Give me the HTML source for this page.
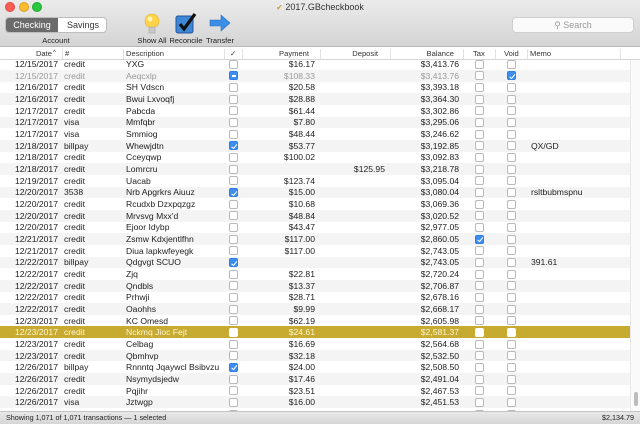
<!DOCTYPE html>
<html><head><style>
*{margin:0;padding:0;box-sizing:border-box}
body{width:640px;height:424px;overflow:hidden;font-family:"Liberation Sans",sans-serif;font-size:8.6px;color:#222;background:#fff;position:relative}
.tb{position:absolute;left:0;top:0;width:640px;height:47px;background:linear-gradient(#ebebeb,#d4d4d4);border-bottom:1px solid #b8b8b8}
.tl{position:absolute;top:2px;width:10px;height:10px;border-radius:50%}
.title{position:absolute;top:2px;left:0;width:640px;text-align:center;font-size:9px;color:#333}
.seg{position:absolute;left:5px;top:17px;width:102px;height:16px;border-radius:4px;border:1px solid #bdbdbd;background:#fff;overflow:hidden;font-size:9px}
.seg div{position:absolute;top:0;height:14px;line-height:14px;text-align:center}
.lbl{position:absolute;top:36px;font-size:7.6px;color:#222;text-align:center}
.search{position:absolute;left:512px;top:17px;width:122px;height:16px;border-radius:4px;background:#fafafa;border:1px solid #cfcfcf;color:#999;font-size:9px;text-align:center;line-height:14px}
.hd{position:absolute;top:48px;left:0;width:640px;height:12px;background:#fff;border-bottom:1px solid #d6d6d6;font-size:7.6px;color:#333;z-index:2}
.hd span{position:absolute;top:1px}
.sep{position:absolute;top:1px;width:1px;height:10px;background:#e2e2e2}
.body{position:absolute;top:60px;left:0;width:630px;height:351px;overflow:hidden}
.r{position:absolute;left:0;width:630px;height:11.66px;line-height:11.66px;white-space:nowrap}
.r:nth-child(even){background:#f4f4f4}
.r span{position:absolute;top:0.8px}
.d{right:572px}.n{left:64px}.s{left:126px}.p{right:315px}.dp{right:245px}.b{right:171px}.m{left:531px}
.cb{position:absolute;top:1.5px;width:9px;height:9px;border:1px solid #b9b9b9;border-radius:2px;background:#fff}
.c1{left:229px}.c2{left:475px}.c3{left:507px}
.on{background:#3d8ef0;border-color:#2f7de0}
.on::after{content:"";position:absolute;left:2.5px;top:0.5px;width:2px;height:4.5px;border:solid #fff;border-width:0 1.2px 1.2px 0;transform:rotate(40deg)}
.mi{background:#3d8ef0;border-color:#2f7de0}
.mi::after{content:"";position:absolute;left:1.5px;top:3px;width:4px;height:1.3px;background:#fff}
.g{color:#999}
.sel{background:#c7aa30 !important;color:#fdf6d0}
.sel .cb{border-color:#fff}
.st{position:absolute;top:411px;left:0;width:640px;height:13px;background:linear-gradient(#e8e8e8,#d6d6d6);border-top:1px solid #c4c4c4;font-size:7.2px;line-height:12px;color:#222}
.sb{position:absolute;left:630px;top:60px;width:10px;height:351px;background:#fafafa;border-left:1px solid #e8e8e8}
</style></head><body>
<div class="tb">
<div class="tl" style="left:5px;background:#fc5f57;border:1px solid #de4a41"></div>
<div class="tl" style="left:19px;background:#fdbc2e;border:1px solid #dea123"></div>
<div class="tl" style="left:32px;background:#28c840;border:1px solid #1daa2c"></div>
<div class="title"><span style="color:#c9a43a;font-size:8px">&#10004;</span> 2017.GBcheckbook</div>
<div class="seg"><div style="left:0;width:52px;background:#6b6b6b;color:#fff">Checking</div><div style="left:53px;width:48px;color:#333">Savings</div></div>
<div class="lbl" style="left:30px;width:52px">Account</div>
<svg style="position:absolute;left:142px;top:13px" width="20" height="22" viewBox="0 0 20 22"><circle cx="10" cy="8" r="7" fill="#fcd34a" stroke="#e8b323" stroke-width=".6"/><circle cx="8" cy="6" r="2.5" fill="#fff3b0"/><rect x="7" y="14" width="6" height="6" fill="#c9c9c9" stroke="#999" stroke-width=".5"/></svg>
<div class="lbl" style="left:134px;width:36px">Show All</div>
<svg style="position:absolute;left:175px;top:12px" width="22" height="22" viewBox="0 0 22 22"><rect x="1" y="4" width="17" height="17" rx="2" fill="#3e86d6" stroke="#23549a"/><path d="M5 12 L9 17 L20 2" fill="none" stroke="#111" stroke-width="3.2"/></svg>
<div class="lbl" style="left:167px;width:38px">Reconcile</div>
<svg style="position:absolute;left:209px;top:14px" width="22" height="18" viewBox="0 0 22 18"><path d="M1 6 H12 V1 L21 9 L12 17 V12 H1 Z" fill="#3a8ee6" stroke="#2a6fc0" stroke-width=".6"/></svg>
<div class="lbl" style="left:203px;width:34px">Transfer</div>
<div class="search">&#9906; Search</div>
</div>
<div class="hd">
<span style="right:588px">Date</span><span style="left:53px;font-size:6px;top:2px">^</span><span style="left:65px">#</span><span style="left:126px">Description</span><span style="left:230px">&#10003;</span><span style="right:331px">Payment</span><span style="right:262px">Deposit</span><span style="right:186px">Balance</span><span style="left:473px">Tax</span><span style="left:504px">Void</span><span style="left:530px">Memo</span>
<div class="sep" style="left:62px"></div><div class="sep" style="left:123px"></div><div class="sep" style="left:224px"></div><div class="sep" style="left:242px"></div><div class="sep" style="left:320px"></div><div class="sep" style="left:390px"></div><div class="sep" style="left:463px"></div><div class="sep" style="left:495px"></div><div class="sep" style="left:527px"></div><div class="sep" style="left:620px"></div>
</div>
<div class="body"><div style="position:absolute;top:-1.7px;left:0;width:630px">
<div class="r" style="top:0px"><span class="d">12/15/2017</span><span class="n">credit</span><span class="s">YXG</span><i class="cb c1"></i><span class="p">$16.17</span><span class="b">$3,413.76</span><i class="cb c2"></i><i class="cb c3"></i></div>
<div class="r g" style="top:11.66px"><span class="d">12/15/2017</span><span class="n">credit</span><span class="s">Aeqcxlp</span><i class="cb c1 mi"></i><span class="p">$108.33</span><span class="b">$3,413.76</span><i class="cb c2"></i><i class="cb c3 on"></i></div>
<div class="r" style="top:23.32px"><span class="d">12/16/2017</span><span class="n">credit</span><span class="s">SH Vdscn</span><i class="cb c1"></i><span class="p">$20.58</span><span class="b">$3,393.18</span><i class="cb c2"></i><i class="cb c3"></i></div>
<div class="r" style="top:34.98px"><span class="d">12/16/2017</span><span class="n">credit</span><span class="s">Bwui Lxvoqfj</span><i class="cb c1"></i><span class="p">$28.88</span><span class="b">$3,364.30</span><i class="cb c2"></i><i class="cb c3"></i></div>
<div class="r" style="top:46.64px"><span class="d">12/17/2017</span><span class="n">credit</span><span class="s">Pabcda</span><i class="cb c1"></i><span class="p">$61.44</span><span class="b">$3,302.86</span><i class="cb c2"></i><i class="cb c3"></i></div>
<div class="r" style="top:58.3px"><span class="d">12/17/2017</span><span class="n">visa</span><span class="s">Mmfqbr</span><i class="cb c1"></i><span class="p">$7.80</span><span class="b">$3,295.06</span><i class="cb c2"></i><i class="cb c3"></i></div>
<div class="r" style="top:69.96px"><span class="d">12/17/2017</span><span class="n">visa</span><span class="s">Smmiog</span><i class="cb c1"></i><span class="p">$48.44</span><span class="b">$3,246.62</span><i class="cb c2"></i><i class="cb c3"></i></div>
<div class="r" style="top:81.62px"><span class="d">12/18/2017</span><span class="n">billpay</span><span class="s">Whewjdtn</span><i class="cb c1 on"></i><span class="p">$53.77</span><span class="b">$3,192.85</span><i class="cb c2"></i><i class="cb c3"></i><span class="m">QX/GD</span></div>
<div class="r" style="top:93.28px"><span class="d">12/18/2017</span><span class="n">credit</span><span class="s">Cceyqwp</span><i class="cb c1"></i><span class="p">$100.02</span><span class="b">$3,092.83</span><i class="cb c2"></i><i class="cb c3"></i></div>
<div class="r" style="top:104.94px"><span class="d">12/18/2017</span><span class="n">credit</span><span class="s">Lomrcru</span><i class="cb c1"></i><span class="dp">$125.95</span><span class="b">$3,218.78</span><i class="cb c2"></i><i class="cb c3"></i></div>
<div class="r" style="top:116.6px"><span class="d">12/19/2017</span><span class="n">credit</span><span class="s">Uacab</span><i class="cb c1"></i><span class="p">$123.74</span><span class="b">$3,095.04</span><i class="cb c2"></i><i class="cb c3"></i></div>
<div class="r" style="top:128.26px"><span class="d">12/20/2017</span><span class="n">3538</span><span class="s">Nrb Apgrkrs Aiuuz</span><i class="cb c1 on"></i><span class="p">$15.00</span><span class="b">$3,080.04</span><i class="cb c2"></i><i class="cb c3"></i><span class="m">rsltbubmspnu</span></div>
<div class="r" style="top:139.92px"><span class="d">12/20/2017</span><span class="n">credit</span><span class="s">Rcudxb Dzxpqzgz</span><i class="cb c1"></i><span class="p">$10.68</span><span class="b">$3,069.36</span><i class="cb c2"></i><i class="cb c3"></i></div>
<div class="r" style="top:151.58px"><span class="d">12/20/2017</span><span class="n">credit</span><span class="s">Mrvsvg Mxx'd</span><i class="cb c1"></i><span class="p">$48.84</span><span class="b">$3,020.52</span><i class="cb c2"></i><i class="cb c3"></i></div>
<div class="r" style="top:163.24px"><span class="d">12/20/2017</span><span class="n">credit</span><span class="s">Ejoor Idybp</span><i class="cb c1"></i><span class="p">$43.47</span><span class="b">$2,977.05</span><i class="cb c2"></i><i class="cb c3"></i></div>
<div class="r" style="top:174.9px"><span class="d">12/21/2017</span><span class="n">credit</span><span class="s">Zsmw Kdxjentlfhn</span><i class="cb c1"></i><span class="p">$117.00</span><span class="b">$2,860.05</span><i class="cb c2 on"></i><i class="cb c3"></i></div>
<div class="r" style="top:186.56px"><span class="d">12/21/2017</span><span class="n">credit</span><span class="s">Diua lapkwfeyegk</span><i class="cb c1"></i><span class="p">$117.00</span><span class="b">$2,743.05</span><i class="cb c2"></i><i class="cb c3"></i></div>
<div class="r" style="top:198.22px"><span class="d">12/22/2017</span><span class="n">billpay</span><span class="s">Qdgvgt SCUO</span><i class="cb c1 on"></i><span class="b">$2,743.05</span><i class="cb c2"></i><i class="cb c3"></i><span class="m">391.61</span></div>
<div class="r" style="top:209.88px"><span class="d">12/22/2017</span><span class="n">credit</span><span class="s">Zjq</span><i class="cb c1"></i><span class="p">$22.81</span><span class="b">$2,720.24</span><i class="cb c2"></i><i class="cb c3"></i></div>
<div class="r" style="top:221.54px"><span class="d">12/22/2017</span><span class="n">credit</span><span class="s">Qndbls</span><i class="cb c1"></i><span class="p">$13.37</span><span class="b">$2,706.87</span><i class="cb c2"></i><i class="cb c3"></i></div>
<div class="r" style="top:233.2px"><span class="d">12/22/2017</span><span class="n">credit</span><span class="s">Prhwji</span><i class="cb c1"></i><span class="p">$28.71</span><span class="b">$2,678.16</span><i class="cb c2"></i><i class="cb c3"></i></div>
<div class="r" style="top:244.86px"><span class="d">12/22/2017</span><span class="n">credit</span><span class="s">Oaohhs</span><i class="cb c1"></i><span class="p">$9.99</span><span class="b">$2,668.17</span><i class="cb c2"></i><i class="cb c3"></i></div>
<div class="r" style="top:256.52px"><span class="d">12/23/2017</span><span class="n">credit</span><span class="s">KC Omesd</span><i class="cb c1"></i><span class="p">$62.19</span><span class="b">$2,605.98</span><i class="cb c2"></i><i class="cb c3"></i></div>
<div class="r sel" style="top:268.18px"><span class="d">12/23/2017</span><span class="n">credit</span><span class="s">Nckmq Jioc Fejt</span><i class="cb c1"></i><span class="p">$24.61</span><span class="b">$2,581.37</span><i class="cb c2"></i><i class="cb c3"></i></div>
<div class="r" style="top:279.84px"><span class="d">12/23/2017</span><span class="n">credit</span><span class="s">Celbag</span><i class="cb c1"></i><span class="p">$16.69</span><span class="b">$2,564.68</span><i class="cb c2"></i><i class="cb c3"></i></div>
<div class="r" style="top:291.5px"><span class="d">12/23/2017</span><span class="n">credit</span><span class="s">Qbmhvp</span><i class="cb c1"></i><span class="p">$32.18</span><span class="b">$2,532.50</span><i class="cb c2"></i><i class="cb c3"></i></div>
<div class="r" style="top:303.16px"><span class="d">12/26/2017</span><span class="n">billpay</span><span class="s">Rnnntq Jqaywcl Bsibvzu</span><i class="cb c1 on"></i><span class="p">$24.00</span><span class="b">$2,508.50</span><i class="cb c2"></i><i class="cb c3"></i></div>
<div class="r" style="top:314.82px"><span class="d">12/26/2017</span><span class="n">credit</span><span class="s">Nsymydsjedw</span><i class="cb c1"></i><span class="p">$17.46</span><span class="b">$2,491.04</span><i class="cb c2"></i><i class="cb c3"></i></div>
<div class="r" style="top:326.48px"><span class="d">12/26/2017</span><span class="n">credit</span><span class="s">Pqjihr</span><i class="cb c1"></i><span class="p">$23.51</span><span class="b">$2,467.53</span><i class="cb c2"></i><i class="cb c3"></i></div>
<div class="r" style="top:338.14px"><span class="d">12/26/2017</span><span class="n">visa</span><span class="s">Jztwgp</span><i class="cb c1"></i><span class="p">$16.00</span><span class="b">$2,451.53</span><i class="cb c2"></i><i class="cb c3"></i></div>
<div class="r" style="top:349.8px"><i class="cb c1"></i><i class="cb c2"></i><i class="cb c3"></i></div>
</div></div>
<div class="sb"><div style="position:absolute;left:3px;top:332px;width:4px;height:14px;border-radius:2px;background:#bdbdbd"></div></div>
<div class="st"><span style="position:absolute;left:6px">Showing 1,071 of 1,071 transactions — 1 selected</span><span style="position:absolute;right:6px">$2,134.79</span></div>
</body></html>
